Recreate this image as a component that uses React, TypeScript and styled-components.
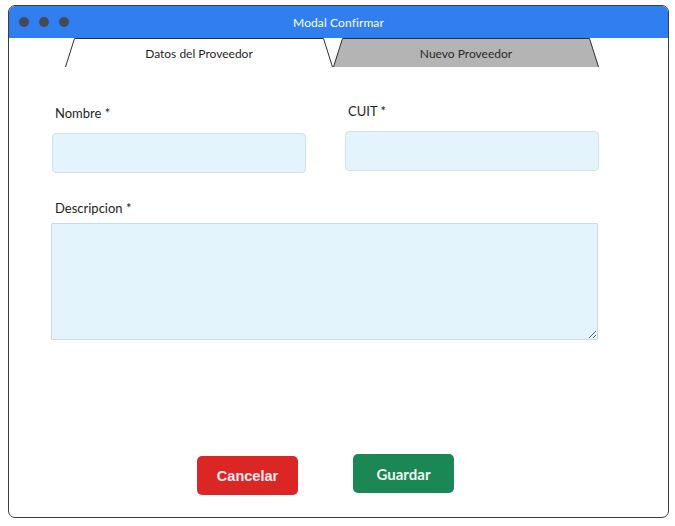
import React from "react";
import styled, { createGlobalStyle } from "styled-components";

const Global = createGlobalStyle`
  html, body { margin: 0; padding: 0; background: #ffffff; }
  body { font-family: Lato, "Noto Sans", sans-serif; }
  * { box-sizing: border-box; }
`;

const Page = styled.div`
  padding: 5px 0 0 8px;
`;

const Window = styled.div`
  width: 661px;
  height: 513px;
  border: 1px solid #3d3d3d;
  border-radius: 7px;
  overflow: hidden;
  display: flex;
  flex-direction: column;
  background: #ffffff;
`;

const TitleBar = styled.div`
  height: 32px;
  flex: none;
  background: #307ef0;
  display: grid;
  grid-template-columns: 1fr auto 1fr;
  align-items: center;
  padding: 0 10px;
`;

const Dots = styled.div`
  display: flex;
  gap: 10px;
`;

const Dot = styled.span`
  width: 10px;
  height: 10px;
  border-radius: 50%;
  background: #454b55;
`;

const Title = styled.div`
  color: #ffffff;
  font-size: 12px;
  letter-spacing: 0.1px;
`;

const TabStrip = styled.div`
  display: flex;
  padding-left: 56px;
  height: 29px;
  flex: none;
`;

const Tab = styled.div<{ $w: number; $active?: boolean }>`
  position: relative;
  width: ${(p) => p.$w}px;
  height: 29px;
  display: flex;
  align-items: center;
  justify-content: center;
  font-size: 12px;
  color: ${(p) => (p.$active ? "#1f1f1f" : "#2a2a2a")};
`;

const TabShape = styled.svg`
  position: absolute;
  inset: 0;
  overflow: visible;
`;

const TabLabel = styled.span`
  position: relative;
  padding-top: 1px;
`;

const Body = styled.div`
  flex: 1;
  display: flex;
  flex-direction: column;
  padding: 38px 0 22px 43px;
`;

const FormGrid = styled.div`
  display: grid;
  grid-template-columns: 254px 254px;
  column-gap: 39px;
  row-gap: 27px;
`;

const Field = styled.div<{ $shift?: number; $span?: boolean }>`
  display: flex;
  flex-direction: column;
  margin-top: ${(p) => (p.$shift ? -p.$shift : 0)}px;
  grid-column: ${(p) => (p.$span ? "1 / span 2" : "auto")};
`;

const Label = styled.label<{ $gap?: number }>`
  font-size: 13px;
  line-height: 16px;
  color: #1e1e1e;
  padding-left: 3px;
  margin-bottom: ${(p) => p.$gap ?? 12}px;
`;

const TextInput = styled.input`
  width: 254px;
  height: 40px;
  border: 1px solid #cfe1ec;
  border-radius: 4px;
  background: #e4f4fd;
  outline: none;
  font: inherit;
  padding: 0 10px;
`;

const TextArea = styled.textarea`
  width: 547px;
  height: 117px;
  margin-left: -1px;
  border: 1px solid #cbdbe5;
  border-radius: 1px;
  background: #e4f4fd;
  outline: none;
  font: inherit;
  resize: vertical;
  display: block;
`;

const Actions = styled.div`
  margin-top: auto;
  display: flex;
  align-items: flex-end;
  gap: 55px;
  padding-left: 145px;
`;

const Button = styled.button<{ $variant: "danger" | "success" }>`
  width: 101px;
  height: 39px;
  border: none;
  border-radius: 5px;
  cursor: pointer;
  background: ${(p) => (p.$variant === "danger" ? "#dc2626" : "#1b8754")};
  color: ${(p) => (p.$variant === "danger" ? "#f6e9e9" : "#eef5f1")};
  font-family: ${(p) =>
    p.$variant === "danger" ? `"Liberation Sans", Arial, sans-serif` : `Lato, "Noto Sans", sans-serif`};
  font-weight: 700;
  font-size: ${(p) => (p.$variant === "danger" ? "14.5px" : "15px")};
  margin-bottom: ${(p) => (p.$variant === "success" ? 2 : 0)}px;
  padding: 0;
`;

function TabOutline({ w, fill }: { w: number; fill: string }) {
  return (
    <TabShape width={w} height={29} viewBox={`0 0 ${w} 29`}>
      <path d={`M0.5,29 L9.5,0.5 L${w - 9.5},0.5 L${w - 0.5},29 Z`} fill={fill} stroke="none" />
      <path
        d={`M0.5,29 L9.5,0.5 L${w - 9.5},0.5 L${w - 0.5},29`}
        fill="none"
        stroke="#2e2e2e"
        strokeWidth={1}
      />
    </TabShape>
  );
}

export default function App() {
  return (
    <Page>
      <Global />
      <Window>
        <TitleBar>
          <Dots>
            <Dot />
            <Dot />
            <Dot />
          </Dots>
          <Title>Modal Confirmar</Title>
          <span />
        </TitleBar>
        <TabStrip>
          <Tab $w={268} $active>
            <TabOutline w={268} fill="#ffffff" />
            <TabLabel>Datos del Proveedor</TabLabel>
          </Tab>
          <Tab $w={266}>
            <TabOutline w={266} fill="#b4b4b4" />
            <TabLabel>Nuevo Proveedor</TabLabel>
          </Tab>
        </TabStrip>
        <Body>
          <FormGrid>
            <Field>
              <Label>Nombre *</Label>
              <TextInput />
            </Field>
            <Field $shift={2}>
              <Label>CUIT *</Label>
              <TextInput />
            </Field>
            <Field $span>
              <Label $gap={7}>Descripcion *</Label>
              <TextArea />
            </Field>
          </FormGrid>
          <Actions>
            <Button $variant="danger">Cancelar</Button>
            <Button $variant="success">Guardar</Button>
          </Actions>
        </Body>
      </Window>
    </Page>
  );
}
